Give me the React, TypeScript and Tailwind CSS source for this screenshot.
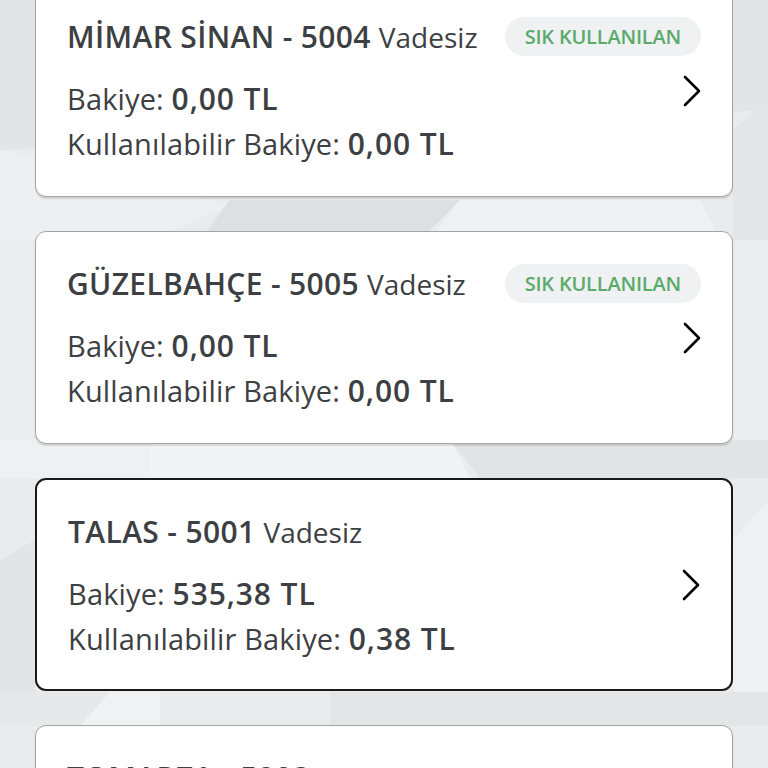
type Account = {
  name: string;
  balance: string;
  available: string;
  frequent?: boolean;
  selected?: boolean;
};

const accounts: Account[] = [
  { name: "MİMAR SİNAN - 5004", balance: "0,00 TL", available: "0,00 TL", frequent: true },
  { name: "GÜZELBAHÇE - 5005", balance: "0,00 TL", available: "0,00 TL", frequent: true },
  { name: "TALAS - 5001", balance: "535,38 TL", available: "0,38 TL", selected: true },
  { name: "TOMARZA - 5003", balance: "0,00 TL", available: "0,00 TL" },
];

function Backdrop() {
  return (
    <svg className="absolute inset-0 h-full w-full" viewBox="0 0 768 768" preserveAspectRatio="none">
      <rect width="768" height="768" fill="#eaebed" />
      <polygon points="0,0 768,0 768,110 0,150" fill="#e3e4e6" />
      <polygon points="0,150 230,205 150,240 0,240" fill="#edeff1" />
      <polygon points="230,200 460,200 420,240 200,240" fill="#dedfe1" />
      <polygon points="460,200 700,200 720,240 430,240" fill="#f0f1f2" />
      <polygon points="733,130 768,100 768,460 733,480" fill="#e4e5e7" />
      <polygon points="0,240 768,240 768,470 0,470" fill="#ebeced" />
      <polygon points="0,440 150,440 150,478 0,478" fill="#eef0f1" />
      <polygon points="150,440 450,440 470,478 150,478" fill="#f2f3f4" />
      <polygon points="450,440 768,440 768,478 480,478" fill="#e1e3e5" />
      <polygon points="0,560 35,540 35,700 0,700" fill="#e3e4e6" />
      <polygon points="733,540 768,500 768,700 733,720" fill="#eef0f1" />
      <polygon points="0,692 110,692 80,726 0,726" fill="#e7e8ea" />
      <polygon points="110,692 160,692 160,726 80,726" fill="#f1f2f3" />
      <polygon points="160,692 330,692 330,726 160,726" fill="#eaebed" />
      <polygon points="330,692 768,692 768,726 330,726" fill="#e3e5e7" />
    </svg>
  );
}

function Chevron() {
  return (
    <svg
      className="absolute right-[31px] top-1/2 -translate-y-1/2"
      width="18"
      height="32"
      viewBox="0 0 18 32"
      fill="none"
    >
      <polyline points="2,2 16,16 2,30" stroke="#000" strokeWidth="2.6" strokeLinecap="round" strokeLinejoin="round" />
    </svg>
  );
}

function AccountCard({ account, first }: { account: Account; first?: boolean }) {
  return (
    <div
      className={`relative mx-[35px] h-[213px] shrink-0 rounded-[11px] bg-white px-[31px] pt-[32px] ${
        account.selected
          ? "border-2 border-[#1a1a1a]"
          : "border-[1.5px] border-[#a3a4a6] shadow-[0_1.5px_1px_rgba(0,0,0,0.12)]"
      } ${first ? "-mt-4" : ""}`}
    >
      <div className="flex h-[39px] items-center justify-between">
        <div className="flex items-baseline gap-[8px] whitespace-nowrap text-[#3d4043]">
          <span className="text-[30px] font-semibold tracking-[0.35px]">{account.name}</span>
          <span className="text-[28px] font-normal tracking-[0px]">Vadesiz</span>
        </div>
        {account.frequent && (
          <span className="flex h-[39px] items-center whitespace-nowrap rounded-full bg-[#f0f1f3] px-[20px] text-[20px] font-semibold tracking-[-0.2px] text-[#5aab6b]">
            SIK KULLANILAN
          </span>
        )}
      </div>
      <div className="mt-[20px] flex flex-col text-[29px] leading-[45px] tracking-[0.15px] text-[#3d4043]">
        <div>
          Bakiye: <span className="text-[30px] font-semibold tracking-[0.9px]">{account.balance}</span>
        </div>
        <div>
          Kullanılabilir Bakiye:{" "}
          <span className="text-[30px] font-semibold tracking-[0.9px]">{account.available}</span>
        </div>
      </div>
      <Chevron />
    </div>
  );
}

export default function App() {
  return (
    <div
      className="relative h-[768px] w-[768px] overflow-hidden"
      style={{ fontFamily: "'Open Sans', 'Noto Sans', sans-serif" }}
    >
      <Backdrop />
      <div className="relative flex flex-col gap-[34px]">
        {accounts.map((a, i) => (
          <AccountCard key={a.name} account={a} first={i === 0} />
        ))}
      </div>
    </div>
  );
}
